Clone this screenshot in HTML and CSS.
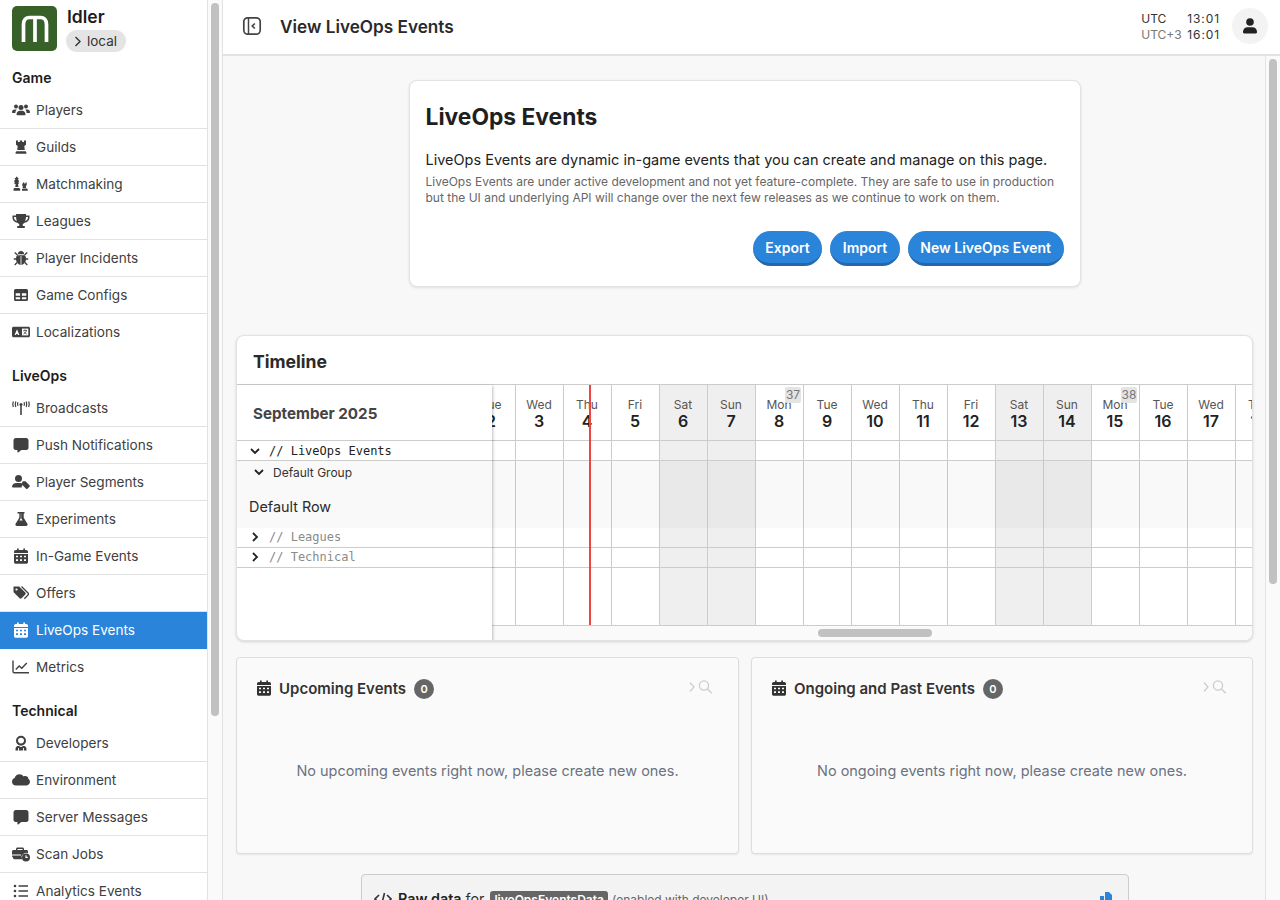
FILE: index.html
```html
<!DOCTYPE html>
<html lang="en">

<head>
  <meta charset="UTF-8">
  <meta name="viewport" content="width=device-width, initial-scale=1.0">
  <title>View LiveOps Events</title>
  <link rel="stylesheet" href="styles.css">
</head>

<body>
  <svg class="icon-defs" width="0" height="0">
    <symbol id="i-users" viewBox="0 0 18 16">
      <circle cx="4" cy="4.6" r="2"/><circle cx="14" cy="4.6" r="2"/><circle cx="9" cy="5.4" r="2.5"/>
      <path d="M0 10.5c0-2 1-3 2.6-3h2.2c-1 1-1.4 2-1.4 3.5H.5c-.3 0-.5-.2-.5-.5zM18 10.5c0-2-1-3-2.6-3h-2.2c1 1 1.4 2 1.4 3.5h2.9c.3 0 .5-.2.5-.5z"/>
      <path d="M4.5 12.5c0-2.3 1.5-3.8 3.5-3.8h2c2 0 3.5 1.5 3.5 3.8 0 .5-.3.8-.8.8H5.3c-.5 0-.8-.3-.8-.8z"/>
    </symbol>
    <symbol id="i-rook" viewBox="0 0 16 16">
      <path d="M3 1.5h2V3h1.8V1.500h2.400V3H11V1.500h2v4.200l-1.700 1.300.5 4H4.200l.5-4L3 5.700zM3.500 12.300h9l.9 1v1.400H2.600v-1.400z"/>
    </symbol>
    <symbol id="i-chess" viewBox="0 0 18 16">
      <path d="M4.200.8h1.300v1.100h1v1H5.600c.9.800 1.400 1.700 1.400 2.500 0 .7-.4 1.100-.8 1.500h.5v1H6l.5 3H3.200l.5-3H2.500v-1H3c-.4-.4-.8-.8-.8-1.500 0-.8.500-1.700 1.400-2.500h-.9v-1h1zM2.500 12h4.700l1 1v1.800H1.500V13zM11 6.500h1.200v1h1.300v-1h1.200v2.700l-.9.700.3 2h-3.500l.3-2-.9-.7zM10.800 12.500h4.100l.8.7v1.600h-5.700v-1.600z"/>
    </symbol>
    <symbol id="i-trophy" viewBox="0 0 18 16">
      <path fill-rule="evenodd" d="M4 1h10v1.500h3.500v2c0 3-2.300 4.900-5 5.200-.5.700-1 1.100-1.700 1.400V13h2v2H5.200v-2h2v-1.900c-.7-.3-1.200-.7-1.700-1.400-2.700-.3-5-2.200-5-5.200v-2H4zM2 4v.6c0 1.700 1.200 3 2.900 3.500C4.400 6.900 4.100 5.500 4 4zm14 0h-2c-.1 1.500-.4 2.900-.9 4.100 1.700-.5 2.900-1.800 2.900-3.500z"/>
    </symbol>
    <symbol id="i-bug" viewBox="0 0 16 16">
      <path d="M5 3.500C5 2 6.300 1 8 1s3 1 3 2.500v.7H5zM4.300 5.200h7.400c.9.700 1.300 1.900 1.300 3.800 0 3.200-2.200 5.700-5 6-2.800-.3-5-2.800-5-6 0-1.900.4-3.100 1.300-3.800z"/>
      <path d="M1.700 2.500l2.800 2.600M14.300 2.500l-2.800 2.600M.8 9h3M12.200 9h3M1.700 15l2.400-2.500M14.300 15l-2.400-2.500" stroke="currentColor" stroke-width="1.300" fill="none"/>
      <path d="M7.600 6h.8v9h-.8z" fill="#fff"/>
    </symbol>
    <symbol id="i-table" viewBox="0 0 16 16">
      <path fill-rule="evenodd" d="M2.500 2h11A1.500 1.500 0 0 1 15 3.500v9a1.500 1.500 0 0 1-1.500 1.500h-11A1.500 1.500 0 0 1 1 12.500v-9A1.500 1.500 0 0 1 2.500 2zM2.700 6.300v2.400h4.400V6.300zm6.200 0v2.400h4.400V6.300zm-6.200 4v2h4.400v-2zm6.200 0v2h4.400v-2z"/>
    </symbol>
    <symbol id="i-lang" viewBox="0 0 18 16">
      <path d="M1.500 2.800h15c.8 0 1.500.7 1.500 1.500v7.400c0 .8-.7 1.500-1.500 1.500h-15c-.8 0-1.500-.7-1.500-1.500V4.300c0-.8.700-1.500 1.500-1.500z"/>
      <path d="M5 5.200l2.400 5.700H6l-.4-1H4.400l-.4 1H2.600z" fill="#fff"/>
      <path d="M10 4.600h6.300v6.800H10z" fill="#fff"/>
      <path d="M11.300 6.400h3.700M13 5.600v1M14.500 6.700c-.4 1.600-1.500 2.700-3 3.300M11.900 7.500c.5 1 1.300 1.900 2.700 2.400" stroke="currentColor" stroke-width=".8" fill="none"/>
    </symbol>
    <symbol id="i-tower" viewBox="0 0 18 16">
      <path d="M8.200 5.500h1.600V15H8.200z"/><circle cx="9" cy="4.600" r="1.500"/>
      <path d="M3.900 1.500C3.200 3.200 3.200 5.300 3.900 7M6 2.200c-.5 1.100-.5 2.400 0 3.500M14.100 1.500c.7 1.700.7 3.800 0 5.500M12 2.200c.5 1.100.5 2.400 0 3.500M1.400 1.500C.7 3.200.7 5.300 1.400 7M16.600 1.500c.7 1.700.7 3.800 0 5.500" fill="none" stroke="currentColor" stroke-width="1.200"/>
    </symbol>
    <symbol id="i-comment" viewBox="0 0 16 16">
      <path d="M2.800 1h10.400C14.500 1 15.500 2 15.500 3.300v7.400c0 1.300-1 2.300-2.300 2.300H8.300l-3 2.500c-.4.300-.9 0-.9-.4V13H2.800C1.500 13 .5 12 .5 10.700V3.300C.5 2 1.500 1 2.800 1z"/>
    </symbol>
    <symbol id="i-usertag" viewBox="0 0 18 16">
      <circle cx="6.500" cy="4.500" r="3.500"/>
      <path d="M4.700 9h3.600c1 0 1.900.3 2.600.8L9.500 13.500H.8c-.4 0-.8-.3-.8-.7C0 10.700 2 9 4.700 9z"/>
      <path d="M11.500 7.300h2l4 4c.4.400.4 1 0 1.400l-2 2c-.4.400-1 .4-1.400 0l-4-4v-2c0-.8.600-1.400 1.400-1.400z"/>
    </symbol>
    <symbol id="i-flask" viewBox="0 0 16 16">
      <path fill-rule="evenodd" d="M4.500 1h7v1.500h-.8v4.200l3.700 6c.6 1.100-.1 2.300-1.300 2.300H3.900c-1.200 0-1.900-1.200-1.300-2.300l3.700-6V2.500h-1.800zM7.800 2.500v4.700L6.400 9.500h3.200L8.200 7.200V2.500z"/>
    </symbol>
    <symbol id="i-cal" viewBox="0 0 16 16">
      <path fill-rule="evenodd" d="M4 .5h1.700v1.500h4.600V.5H12V2h1.200C14.200 2 15 2.800 15 3.800V5H1V3.800C1 2.800 1.800 2 2.800 2H4zM1 6h14v8.200c0 .8-.8 1.500-1.800 1.500H2.800C1.800 15.700 1 15 1 14.200zm2 1.700v1.600h2V7.700zm4 0v1.600h2V7.700zm4 0v1.600h2V7.700zM3 11.300v1.700h2v-1.700zm4 0v1.700h2v-1.700zm4 0v1.700h2v-1.700z"/>
    </symbol>
    <symbol id="i-tags" viewBox="0 0 18 16">
      <path d="M1.500 1.500h5.200c.4 0 .8.200 1 .4l5.600 5.600c.6.600.6 1.500 0 2l-3.700 3.700c-.6.600-1.500.6-2 0L1.900 7.500c-.3-.3-.4-.6-.4-1z"/>
      <path d="M9.500 1.500l6.500 6.500c.6.600.6 1.500 0 2l-3.700 3.700" fill="none" stroke="currentColor" stroke-width="1.300"/>
      <circle cx="4.500" cy="4.500" r="1.100" fill="#fff"/>
    </symbol>
    <symbol id="i-chart" viewBox="0 0 18 16">
      <path d="M1 1.500v11c0 .8.500 1.300 1.300 1.300H17" fill="none" stroke="currentColor" stroke-width="1.400"/>
      <path d="M3.800 10.500l3.400-3.600 2.600 2.400 5-5.300" fill="none" stroke="currentColor" stroke-width="1.400"/>
    </symbol>
    <symbol id="i-dev" viewBox="0 0 16 16">
      <path fill-rule="evenodd" d="M8 .8a5 5 0 0 1 5 5 5 5 0 0 1-5 5 5 5 0 0 1-5-5 5 5 0 0 1 5-5zm0 2C6.400 2.800 5 3.800 5 5.500s1.400 3 3 3 3-1.300 3-3-1.400-2.700-3-2.700z"/>
      <path d="M4.500 11h1.600c.5.600 1.100 1 1.900 1s1.400-.4 1.900-1h1.600c1.200.5 2 1.600 2 3v1.500h-2.500V13h-.9v2.500H5.900V13H5v2.500H2.500V14c0-1.400.8-2.500 2-3z"/>
    </symbol>
    <symbol id="i-cloud" viewBox="0 0 18 16">
      <path d="M4 13.500c-2.200 0-4-1.700-4-3.800 0-1.700 1.100-3.100 2.700-3.600C3.200 3.800 5.100 2.200 7.500 2.200c1.700 0 3.200.9 4 2.200.6-.3 1.100-.4 1.700-.4 1.800 0 3.200 1.300 3.300 3 .9.600 1.500 1.600 1.500 2.800 0 2-1.700 3.700-3.800 3.700z"/>
    </symbol>
    <symbol id="i-jobs" viewBox="0 0 18 16">
      <path fill-rule="evenodd" d="M5.500 1.500h5c.8 0 1.500.7 1.500 1.500v1h2.500c.8 0 1.500.7 1.500 1.500v1.700a5 5 0 0 0-6.700 4.300H1.500c-.8 0-1.500-.7-1.500-1.500V5.500C0 4.700.7 4 1.500 4H4V3c0-.8.700-1.500 1.500-1.500zM5.500 3v1h5V3zM0 8.500h9v1H0z"/>
      <path d="M1 11h8.600c.1.800.4 1.500.8 2.200H2.500C1.700 13.200 1 12.500 1 11.700z"/>
      <path fill-rule="evenodd" d="M14 7.500a4 4 0 1 1 0 8 4 4 0 0 1 0-8zm-.6 1.800v2.600h2.400v-1.100h-1.300V9.300z"/>
    </symbol>
    <symbol id="i-list" viewBox="0 0 16 16">
      <circle cx="2" cy="3" r="1.300"/><circle cx="2" cy="8" r="1.300"/><circle cx="2" cy="13" r="1.300"/>
      <path d="M5.500 2.200H15v1.600H5.500zM5.500 7.200H15v1.600H5.500zM5.500 12.200H15v1.600H5.500z"/>
    </symbol>
    <symbol id="i-finder" viewBox="0 0 26 16">
      <path d="M2 3.500l4 4.500-4 4.500" fill="none" stroke="currentColor" stroke-width="1.200"/>
      <circle cx="16" cy="6.500" r="4.600" fill="none" stroke="currentColor" stroke-width="1.300"/>
      <path d="M19.500 10l4.200 4.200" fill="none" stroke="currentColor" stroke-width="1.300"/>
    </symbol>
  </svg>

  <aside class="sidebar">
    <div class="brand">
      <div class="logo">
        <svg width="30" height="27" viewBox="0 0 30 27">
          <path d="M3.500 27V9.500C3.500 5 6 2.500 9.500 2.500h11c3.500 0 6 2.500 6 7V27M15 3v24" fill="none" stroke="#fff" stroke-width="3.700"/>
        </svg>
      </div>
      <div>
        <div class="brand-name">Idler</div>
        <div class="env-pill">
          <svg width="8" height="11" viewBox="0 0 8 11"><path d="M1.500 1l4.500 4.500L1.500 10" fill="none" stroke="#333" stroke-width="1.400"/></svg>
          local
        </div>
      </div>
    </div>

    <div class="nav-title">Game</div>
    <a class="nav-item"><svg class="nav-icon"><use href="#i-users"/></svg>Players</a>
    <a class="nav-item"><svg class="nav-icon"><use href="#i-rook"/></svg>Guilds</a>
    <a class="nav-item"><svg class="nav-icon"><use href="#i-chess"/></svg>Matchmaking</a>
    <a class="nav-item"><svg class="nav-icon"><use href="#i-trophy"/></svg>Leagues</a>
    <a class="nav-item"><svg class="nav-icon"><use href="#i-bug"/></svg>Player Incidents</a>
    <a class="nav-item"><svg class="nav-icon"><use href="#i-table"/></svg>Game Configs</a>
    <a class="nav-item"><svg class="nav-icon"><use href="#i-lang"/></svg>Localizations</a>

    <div class="nav-title spaced">LiveOps</div>
    <a class="nav-item"><svg class="nav-icon"><use href="#i-tower"/></svg>Broadcasts</a>
    <a class="nav-item"><svg class="nav-icon"><use href="#i-comment"/></svg>Push Notifications</a>
    <a class="nav-item"><svg class="nav-icon"><use href="#i-usertag"/></svg>Player Segments</a>
    <a class="nav-item"><svg class="nav-icon"><use href="#i-flask"/></svg>Experiments</a>
    <a class="nav-item"><svg class="nav-icon"><use href="#i-cal"/></svg>In-Game Events</a>
    <a class="nav-item"><svg class="nav-icon"><use href="#i-tags"/></svg>Offers</a>
    <a class="nav-item active"><svg class="nav-icon"><use href="#i-cal"/></svg>LiveOps Events</a>
    <a class="nav-item"><svg class="nav-icon"><use href="#i-chart"/></svg>Metrics</a>

    <div class="nav-title spaced">Technical</div>
    <a class="nav-item"><svg class="nav-icon"><use href="#i-dev"/></svg>Developers</a>
    <a class="nav-item"><svg class="nav-icon"><use href="#i-cloud"/></svg>Environment</a>
    <a class="nav-item"><svg class="nav-icon"><use href="#i-comment"/></svg>Server Messages</a>
    <a class="nav-item"><svg class="nav-icon"><use href="#i-jobs"/></svg>Scan Jobs</a>
    <a class="nav-item"><svg class="nav-icon"><use href="#i-list"/></svg>Analytics Events</a>
  </aside>

  <div class="side-scroll"><div class="side-thumb"></div></div>

  <div class="main">
    <header class="topbar">
      <svg class="collapse" width="20" height="20" viewBox="0 0 20 20">
        <rect x="1.800" y="1.800" width="16.400" height="16.400" rx="4" fill="none" stroke="#444" stroke-width="1.700"/>
        <path d="M6.500 2v16" stroke="#444" stroke-width="1.500"/>
        <path d="M12.800 7.500L10.300 10l2.500 2.500" fill="none" stroke="#444" stroke-width="1.700"/>
      </svg>
      <h1 class="page-title">View LiveOps Events</h1>
      <div class="clock">
        <span>UTC</span><span class="time">13:01</span>
        <span class="muted">UTC+3</span><span class="time">16:01</span>
      </div>
      <div class="avatar">
        <svg width="14" height="16" viewBox="0 0 14 16">
          <circle cx="7" cy="4" r="3.800" fill="#222"/>
          <path d="M4.500 9.200h5c2.500 0 4.500 2 4.500 4.500v.6c0 .6-.5 1.100-1.100 1.100H1.100C.5 15.400 0 14.900 0 14.300v-.6c0-2.500 2-4.500 4.500-4.500z" fill="#222"/>
        </svg>
      </div>
    </header>

    <div class="page">
      <div class="content">
        <section class="hero">
          <h2>LiveOps Events</h2>
          <p class="lead">LiveOps Events are dynamic in-game events that you can create and manage on this page.</p>
          <p class="note">LiveOps Events are under active development and not yet feature-complete. They are safe to use in production but the UI and underlying API will change over the next few releases as we continue to work on them.</p>
          <div class="hero-actions">
            <button class="btn">Export</button>
            <button class="btn">Import</button>
            <button class="btn">New LiveOps Event</button>
          </div>
        </section>

        <section class="timeline">
          <h3 class="timeline-title">Timeline</h3>
          <div class="timeline-body">
            <div class="track">
              <div class="track-grid">
                <div class="day-col"><div class="day-head">Tue<b>2</b></div></div>
                <div class="day-col"><div class="day-head">Wed<b>3</b></div></div>
                <div class="day-col"><div class="day-head">Thu<b>4</b></div></div>
                <div class="day-col"><div class="day-head">Fri<b>5</b></div></div>
                <div class="day-col weekend"><div class="day-head">Sat<b>6</b></div></div>
                <div class="day-col weekend"><div class="day-head">Sun<b>7</b></div></div>
                <div class="day-col"><div class="day-head">Mon<b>8</b><span class="week-no">37</span></div></div>
                <div class="day-col"><div class="day-head">Tue<b>9</b></div></div>
                <div class="day-col"><div class="day-head">Wed<b>10</b></div></div>
                <div class="day-col"><div class="day-head">Thu<b>11</b></div></div>
                <div class="day-col"><div class="day-head">Fri<b>12</b></div></div>
                <div class="day-col weekend"><div class="day-head">Sat<b>13</b></div></div>
                <div class="day-col weekend"><div class="day-head">Sun<b>14</b></div></div>
                <div class="day-col"><div class="day-head">Mon<b>15</b><span class="week-no">38</span></div></div>
                <div class="day-col"><div class="day-head">Tue<b>16</b></div></div>
                <div class="day-col"><div class="day-head">Wed<b>17</b></div></div>
                <div class="day-col"><div class="day-head">Thu<b>18</b></div></div>
              </div>
              <div class="track-rows">
                <div class="track-row r-cat"></div>
                <div class="track-row r-group"></div>
                <div class="track-row r-cat"></div>
                <div class="track-row r-cat"></div>
              </div>
              <div class="now-line"></div>
            </div>
            <div class="h-scroll"><div class="h-thumb"></div></div>

            <div class="time-labels">
              <div class="month">September 2025</div>
              <div class="cat">
                <svg class="chev" viewBox="0 0 10 10"><path d="M1 3l4 4 4-4"/></svg>// LiveOps Events
              </div>
              <div class="group-block">
                <div class="group-name">
                  <svg class="chev" viewBox="0 0 10 10"><path d="M1 3l4 4 4-4"/></svg>Default Group
                </div>
                <div class="row-name">Default Row</div>
              </div>
              <div class="cat off">
                <svg class="chev" viewBox="0 0 10 10"><path d="M3 1l4 4-4 4"/></svg>// Leagues
              </div>
              <div class="cat off">
                <svg class="chev" viewBox="0 0 10 10"><path d="M3 1l4 4-4 4"/></svg>// Technical
              </div>
            </div>
          </div>
        </section>

        <div class="lists">
          <section class="list-card">
            <div class="list-head">
              <svg class="list-icon"><use href="#i-cal"/></svg>
              <span class="list-title">Upcoming Events</span>
              <span class="count">0</span>
              <svg class="finder"><use href="#i-finder"/></svg>
            </div>
            <p class="empty">No upcoming events right now, please create new ones.</p>
          </section>
          <section class="list-card">
            <div class="list-head">
              <svg class="list-icon"><use href="#i-cal"/></svg>
              <span class="list-title">Ongoing and Past Events</span>
              <span class="count">0</span>
              <svg class="finder"><use href="#i-finder"/></svg>
            </div>
            <p class="empty">No ongoing events right now, please create new ones.</p>
          </section>
        </div>

        <section class="raw">
          <svg class="raw-icon" width="18" height="14" viewBox="0 0 18 14">
            <path d="M5 3L1 7l4 4M13 3l4 4-4 4M10.500 1L7.500 13" fill="none" stroke="#333" stroke-width="1.600"/>
          </svg>
          <b>Raw data</b> <span>for</span> <code>liveOpsEventsData</code> <small>(enabled with developer UI)</small>
          <svg class="raw-copy" width="12" height="14" viewBox="0 0 12 14">
            <path d="M5 0h4l3 3v7H5zM0 4h4v8h4v2H0z" fill="#2a84d9"/>
          </svg>
        </section>
      </div>
      <div class="page-scroll"><div class="page-thumb"></div></div>
    </div>
  </div>
</body>

</html>
```

FILE: styles.css
```css
* {
  box-sizing: border-box;
}

html,
body {
  height: 100%;
}

body {
  margin: 0;
  display: flex;
  overflow: hidden;
  font-family: Inter, "Liberation Sans", sans-serif;
  color: #222;
  background-color: #f8f8f8;
}

.icon-defs {
  position: absolute;
}

/* sidebar */

.sidebar {
  width: 208px;
  flex: none;
  height: 100%;
  overflow: hidden;
  background-color: #fff;
  border-right: 1px solid #e2e2e2;
}

.brand {
  height: 64px;
  padding: 6px 0 0 12px;
  display: flex;
  gap: 9px;
}

.logo {
  width: 45px;
  height: 45px;
  background-color: #386029;
  border-radius: 5px;
  display: flex;
  justify-content: center;
  align-items: flex-end;
  padding-bottom: 9px;
}

.brand-name {
  font-size: 17.5px;
  font-weight: 600;
  line-height: 22px;
  margin-left: 1px;
  color: #1c1c1c;
}

.env-pill {
  margin-top: 2px;
  height: 22px;
  width: 60px;
  border-radius: 11px;
  background-color: #e4e4e4;
  font-size: 13.5px;
  color: #333;
  display: flex;
  align-items: center;
  gap: 5px;
  padding-left: 8px;
}

.nav-title {
  height: 28px;
  line-height: 28px;
  padding-left: 12px;
  font-size: 14px;
  font-weight: 600;
  color: #1c1c1c;
}

.nav-title.spaced {
  margin-top: 12px;
}

.nav-item {
  height: 37px;
  padding-left: 12px;
  display: flex;
  align-items: center;
  gap: 6px;
  font-size: 13.6px;
  color: #404040;
  border-bottom: 1px solid #e2e2e2;
}

.nav-item:has(+ .nav-title),
.nav-item:last-child {
  height: 36px;
  border-bottom: none;
}

.nav-item.active {
  height: 37px;
  background-color: #2a84d9;
  color: #fff;
  border-bottom-color: #2a84d9;
}

.nav-icon {
  width: 18px;
  height: 16px;
  flex: none;
  fill: currentColor;
}

/* fake scrollbars */

.side-scroll {
  width: 15px;
  flex: none;
  height: 100%;
  padding: 3px 3px 0;
  background-color: #fafafa;
  border-right: 1px solid #e2e2e2;
}

.side-thumb {
  width: 8px;
  height: 713px;
  border-radius: 4px;
  background-color: #c1c1c1;
}

.page-scroll {
  width: 15px;
  flex: none;
  padding: 3px 0 0 3px;
  background-color: #fafafa;
  border-left: 1px solid #e4e4e4;
}

.page-thumb {
  width: 8px;
  height: 525px;
  border-radius: 4px;
  background-color: #c1c1c1;
}

/* top bar */

.main {
  flex: 1;
  min-width: 0;
  display: flex;
  flex-direction: column;
}

.topbar {
  height: 56px;
  flex: none;
  display: flex;
  align-items: center;
  padding: 0 12px 2px 19px;
  background-color: #fff;
  border-bottom: 2px solid #e2e2e2;
}

.page-title {
  margin: 0 0 0 18px;
  font-size: 17.2px;
  font-weight: 600;
  color: #2a2a2a;
}

.clock {
  margin-left: auto;
  padding-top: 2px;
  display: grid;
  grid-template-columns: 46px auto;
  font-size: 12px;
  line-height: 16px;
  color: #333;
}

.clock .muted {
  color: #777;
}

.clock .time {
  letter-spacing: 0.9px;
}

.avatar {
  margin-left: 12px;
  width: 36px;
  height: 36px;
  border-radius: 50%;
  background-color: #f3f3f3;
  display: flex;
  align-items: center;
  justify-content: center;
}

/* page */

.page {
  flex: 1;
  min-height: 0;
  display: flex;
}

.content {
  flex: 1;
  min-width: 0;
  padding: 24px 12px 0 13px;
  overflow: hidden;
}

.hero {
  width: 672px;
  height: 207px;
  margin: 0 auto 48px;
  padding: 16px;
  background-color: #fff;
  border: 1px solid #e2e2e2;
  border-radius: 8px;
  box-shadow: 0 1px 3px rgba(0, 0, 0, 0.1);
}

.hero h2 {
  margin: 4px 0 17px;
  font-size: 22.8px;
  font-weight: 700;
  line-height: 32px;
  color: #1f1f1f;
}

.lead {
  margin: 0;
  font-size: 14.5px;
  line-height: 20px;
  color: #222;
}

.note {
  margin: 4px 0 0;
  font-size: 12px;
  line-height: 16px;
  color: #666;
}

.hero-actions {
  margin-top: 25px;
  display: flex;
  justify-content: flex-end;
  gap: 8px;
}

.btn {
  height: 35px;
  padding: 0 12.5px;
  border: none;
  border-bottom: 3px solid #2467ab;
  border-radius: 18px;
  background-color: #2a84d9;
  color: #fff;
  font-family: inherit;
  font-size: 14px;
  font-weight: 600;
}

/* timeline */

.timeline {
  height: 306px;
  position: relative;
  background-color: #fff;
  border: 1px solid #e2e2e2;
  border-radius: 8px;
  box-shadow: 0 1px 3px rgba(0, 0, 0, 0.15);
  overflow: hidden;
}

.timeline-title {
  height: 49px;
  margin: 0;
  padding-left: 16px;
  font-size: 17.6px;
  font-weight: 700;
  line-height: 51px;
  color: #2a2a2a;
  border-bottom: 1px solid #ccc;
}

.timeline-body {
  position: relative;
}

.track {
  height: 241px;
  display: grid;
  position: relative;
  overflow: hidden;
  padding-left: 231px;
  border-bottom: 1px solid #ccc;
}

.track-grid,
.track-rows {
  grid-area: 1 / 1;
}

.track-grid {
  display: flex;
}

.day-col {
  width: 48px;
  flex: none;
  border-right: 1px solid #ccc;
}

.day-col.weekend {
  background-color: #efefef;
}

.day-head {
  height: 56px;
  position: relative;
  padding: 12px 1px 0 0;
  text-align: center;
  font-size: 12px;
  line-height: 15px;
  color: #555;
}

.day-head b {
  display: block;
  font-size: 16px;
  line-height: 18px;
  font-weight: 600;
  color: #222;
}

.week-no {
  position: absolute;
  top: 2px;
  right: 2px;
  width: 16px;
  height: 16px;
  border-radius: 2px;
  background-color: #e4e4e4;
  color: #777;
  line-height: 16px;
}

.track-rows {
  margin-left: -231px;
  padding-top: 55px;
  display: flex;
  flex-direction: column;
}

.track-row {
  border-bottom: 1px solid #ccc;
}

.r-cat {
  height: 20px;
}

.r-cat:first-child {
  border-top: 1px solid #ccc;
  height: 21px;
}

.r-group {
  height: 67px;
  border-bottom: none;
  background-color: rgba(0, 0, 0, 0.025);
}

.now-line {
  position: absolute;
  left: 352px;
  top: 0;
  bottom: 0;
  width: 2px;
  background-color: #ef4444;
}

.h-scroll {
  height: 15px;
  padding: 3px 0 0 581px;
  background-color: #fafafa;
}

.h-thumb {
  width: 114px;
  height: 8px;
  border-radius: 4px;
  background-color: #c1c1c1;
}

.time-labels {
  position: absolute;
  left: 0;
  top: 0;
  bottom: 0;
  width: 255px;
  background-color: #fff;
  border-bottom-left-radius: 8px;
  box-shadow: 1px 1px 3px rgba(0, 0, 0, 0.25);
}

.month {
  height: 56px;
  padding-left: 16px;
  line-height: 58px;
  font-size: 15.2px;
  font-weight: 700;
  color: #444;
  border-bottom: 1px solid #ccc;
}

.cat {
  height: 20px;
  display: flex;
  align-items: center;
  padding-left: 13px;
  gap: 9px;
  font-family: "DejaVu Sans Mono", "Liberation Mono", monospace;
  font-size: 12px;
  color: #222;
  border-bottom: 1px solid #ccc;
}

.cat.off {
  padding-bottom: 2px;
  color: #8a8a8a;
}

.chev {
  width: 10px;
  height: 10px;
  flex: none;
  fill: none;
  stroke: #222;
  stroke-width: 1.8;
}

.group-block {
  height: 67px;
  background-color: #f9f9f9;
}

.group-name {
  height: 22px;
  display: flex;
  align-items: center;
  gap: 9px;
  padding-left: 17px;
  font-size: 12px;
  color: #333;
}

.row-name {
  padding: 14px 0 0 12px;
  font-size: 14.4px;
  line-height: 20px;
  color: #2a2a2a;
}

/* event lists */

.lists {
  margin-top: 16px;
  display: grid;
  grid-template-columns: 503px 502px;
  gap: 12px;
}

.list-card {
  height: 197px;
  padding: 19px 20px 0;
  background-color: #fafafa;
  border: 1px solid #ddd;
  border-radius: 4px;
  box-shadow: 0 1px 2px rgba(0, 0, 0, 0.07);
}

.list-head {
  height: 22px;
  display: flex;
  align-items: center;
}

.list-icon {
  width: 16px;
  height: 16px;
  flex: none;
  margin-left: -1px;
  margin-right: 7px;
  fill: #333;
}

.list-title {
  font-size: 15px;
  font-weight: 600;
  color: #333;
}

.count {
  margin: 2px 0 0 8px;
  width: 20px;
  height: 20px;
  border-radius: 50%;
  background-color: #666;
  color: #fff;
  font-size: 11px;
  font-weight: 600;
  line-height: 20px;
  text-align: center;
}

.finder {
  margin-left: auto;
  margin-right: 4px;
  margin-top: -3px;
  width: 26px;
  height: 16px;
  color: #ccc;
}

.empty {
  margin: 62px 0 0;
  text-align: center;
  font-size: 14.45px;
  line-height: 20px;
  color: #6b7280;
}

/* raw data */

.raw {
  width: 768px;
  height: 60px;
  margin: 20px auto 0 125px;
  padding: 15px 16px 0 12px;
  background-color: #f3f3f3;
  border: 1px solid #ccc;
  border-radius: 4px;
  font-size: 14.3px;
  color: #333;
  position: relative;
}

.raw b {
  font-weight: 600;
  color: #222;
}

.raw code {
  margin-left: 2px;
  padding: 1px 4px;
  border-radius: 3px;
  background-color: #666;
  color: #fff;
  font-family: inherit;
  font-size: 12px;
  font-weight: 600;
}

.raw small {
  font-size: 12px;
  color: #666;
}

.raw-icon {
  vertical-align: -2px;
  margin-right: 2px;
}

.raw-copy {
  position: absolute;
  right: 16px;
  top: 17px;
}
```
